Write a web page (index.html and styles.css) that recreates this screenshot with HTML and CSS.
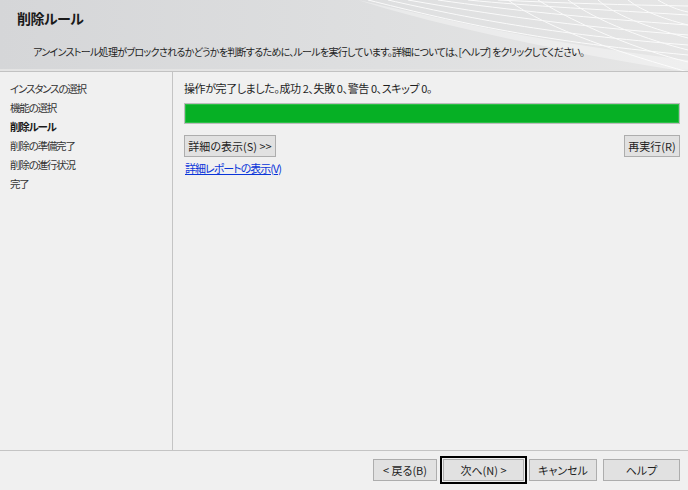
FILE: index.html
```html
<!DOCTYPE html>
<html lang="ja">
<head>
<meta charset="utf-8">
<link rel="stylesheet" href="styles.css">
</head>
<body>
<div class="window">
  <header class="header">
    <svg class="mesh" width="360" height="72" viewBox="0 0 360 72">
      <g fill="none" stroke="#ffffff" stroke-width="1" opacity="0.85">
        <path d="M40 0 C120 20 200 40 360 55"/>
        <path d="M60 0 C140 18 220 34 360 45"/>
        <path d="M80 0 C160 14 240 26 360 35"/>
        <path d="M110 0 C180 10 260 18 360 25"/>
        <path d="M140 0 C200 6 280 10 360 15"/>
        <path d="M170 0 C230 3 300 5 360 6"/>
        <path d="M180 0 C220 30 300 55 360 72"/>
        <path d="M210 0 C250 25 310 50 360 62"/>
        <path d="M240 0 C270 22 320 40 360 50"/>
        <path d="M270 0 C290 18 330 30 360 38"/>
        <path d="M300 0 C315 12 340 20 360 25"/>
        <path d="M330 0 C340 6 350 10 360 12"/>
      </g>
      <path d="M30 0 C140 25 230 45 360 60 L360 72 C280 60 180 40 100 20 C70 12 45 5 30 0 Z" fill="#ffffff" opacity="0.35"/>
    </svg>
    <h1 class="title">削除ルール</h1>
    <p class="subtitle">アンインストール処理がブロックされるかどうかを判断するために、ルールを実行しています。詳細については、[ヘルプ] をクリックしてください。</p>
  </header>
  <div class="main">
    <nav class="nav">
      <div class="nav-item">インスタンスの選択</div>
      <div class="nav-item">機能の選択</div>
      <div class="nav-item active">削除ルール</div>
      <div class="nav-item">削除の準備完了</div>
      <div class="nav-item">削除の進行状況</div>
      <div class="nav-item">完了</div>
    </nav>
    <section class="content">
      <div class="status">操作が完了しました。成功 2、失敗 0、警告 0、スキップ 0。</div>
      <div class="progress"></div>
      <div class="btn-row">
        <button class="btn btn-details">詳細の表示(S) &gt;&gt;</button>
        <button class="btn btn-retry">再実行(R)</button>
      </div>
      <a class="report-link" href="#">詳細レポートの表示(V)</a>
    </section>
  </div>
  <footer class="footer">
    <button class="btn btn-back">&lt; 戻る(B)</button>
    <button class="btn btn-next">次へ(N) &gt;</button>
    <button class="btn btn-cancel">キャンセル</button>
    <button class="btn btn-help">ヘルプ</button>
  </footer>
</div>
</body>
</html>
```
FILE: styles.css
```css
* { box-sizing: border-box; }
html, body {
  margin: 0;
  padding: 0;
  background: #f0f0f0;
}
body {
  font-family: "Noto Sans CJK JP", "Noto Sans", sans-serif;
  font-size: 11px;
  color: #1e1e1e;
  font-feature-settings: "palt";
}
.window {
  width: 688px;
  height: 490px;
  display: flex;
  flex-direction: column;
  overflow: hidden;
}
.header {
  position: relative;
  height: 72px;
  flex: none;
  background: linear-gradient(90deg, #d5d6d8 0%, #dedfe0 55%, #e6e6e6 100%);
  border-bottom: 1px solid #c2c2c2;
  box-shadow: inset 0 -2px 0 #e4e4e4;
  overflow: hidden;
}
.mesh {
  position: absolute;
  right: 0;
  top: 0;
}
.title {
  position: relative;
  margin: 0;
  padding: 8px 0 0 17px;
  font-size: 14px;
  font-weight: bold;
  line-height: 20px;
  color: #1a1a1a;
  letter-spacing: -0.5px;
}
.subtitle {
  position: relative;
  margin: 0;
  padding: 16px 0 0 33px;
  font-size: 10px;
  letter-spacing: -0.7px;
  line-height: 16px;
  color: #1e1e1e;
  white-space: nowrap;
}
.main {
  flex: 1;
  display: flex;
  min-height: 0;
}
.nav {
  width: 173px;
  flex: none;
  border-right: 1px solid #c4c4c4;
  padding: 7px 0 0 10px;
}
.nav-item {
  line-height: 19px;
  height: 19px;
  color: #333;
  font-size: 10.5px;
  letter-spacing: -1.2px;
}
.nav-item.active {
  font-weight: bold;
  color: #1a1a1a;
}
.content {
  flex: 1;
  padding: 7px 8px 0 11px;
  display: flex;
  flex-direction: column;
  align-items: flex-start;
}
.status {
  line-height: 19px;
  height: 19px;
  letter-spacing: -0.4px;
}
.progress {
  margin-top: 5px;
  width: 100%;
  height: 21px;
  background: #06b025;
  border: 1px solid #bcbcbc;
  box-shadow: inset 0 0 0 1px #2cbf47;
}
.btn-row {
  margin-top: 11px;
  width: 100%;
  display: flex;
  justify-content: space-between;
}
.btn {
  font-family: inherit;
  font-size: 11px;
  font-feature-settings: "palt";
  color: #1e1e1e;
  background: #e1e1e1;
  border: 1px solid #adadad;
  border-radius: 0;
  height: 22px;
  padding: 0;
  line-height: 20px;
  margin: 0;
}
.btn-details { width: 92px; }
.btn-retry { width: 56px; }
.report-link {
  margin-top: 2px;
  margin-left: 1px;
  line-height: 19px;
  color: #0a35d9;
  text-decoration: underline;
  letter-spacing: -1px;
}
.footer {
  height: 40px;
  flex: none;
  border-top: 1px solid #c4c4c4;
  display: flex;
  justify-content: flex-end;
  align-items: flex-start;
  padding: 8px 8px 0 0;
}
.btn-back { width: 64px; }
.btn-next {
  width: 81px;
  margin-left: 6px;
  outline: 2px solid #000;
  outline-offset: 1px;
}
.btn-cancel { width: 68px; margin-left: 5px; }
.btn-help { width: 77px; margin-left: 6px; }
```
